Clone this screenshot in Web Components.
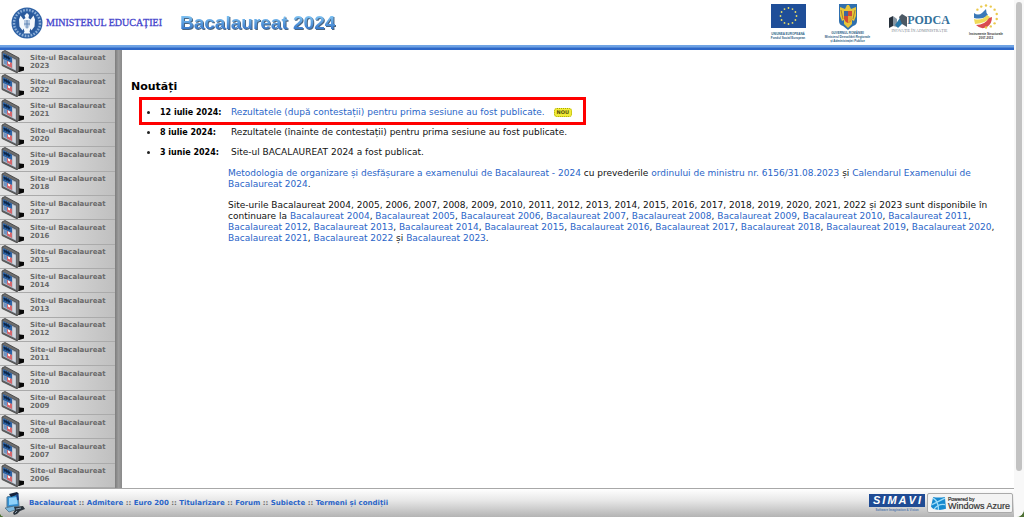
<!DOCTYPE html>
<html lang="ro">
<head>
<meta charset="utf-8">
<title>Bacalaureat 2024</title>
<style>
html, body { margin: 0; height: 100%; }
body { font: 9px/11px Verdana, "DejaVu Sans", sans-serif; color: #111; background: #4d7034; }
</style>
</head>
<body>
<bac-page></bac-page>
<script>
const define = (name, html, setup) => customElements.define(name, class extends HTMLElement {
  constructor() {
    super();
    this.attachShadow({ mode: "open" });
    const t = document.createElement("template");
    t.innerHTML = html;
    this.shadowRoot.append(t.content.cloneNode(true));
  }
  connectedCallback() { if (setup) setup(this, this.shadowRoot); }
});
const range = (a, b) => Array.from({ length: b - a + 1 }, (_, i) => a + i);

define("ministry-logo", `
<style>
:host { display: flex; align-items: center; gap: 3px; color: #4444cc; font: 10px/12px "Liberation Serif", serif; white-space: nowrap; -webkit-text-stroke: .3px #4444cc; }
svg { width: 32px; height: 32px; flex: none; }
</style>
<svg viewBox="0 0 32 32" aria-hidden="true">
  <circle cx="16" cy="16" r="15.5" fill="#2f62a5"/>
  <circle cx="16" cy="16" r="13" fill="none" stroke="#8fb0d8" stroke-width="2.4" stroke-dasharray="1.6 1.4"/>
  <circle cx="16" cy="16" r="10.8" fill="#2a5a9c"/>
  <path d="M16 6l2 2-.5 3 2 1.500 3-4 1.500 4-.5 7-3 4-1-2-1 3 1 2h-7l1-2-1-3-1 2-3-4L8 12.500 9.500 8.500l3 4 2-1.500-1-2.500z" fill="#f4f8fc"/>
  <path d="M13 13h6v5q-1 3-3 4-2-1-3-4z" fill="#b8cbe2"/><path d="M16 13v8M13 17h6" stroke="#5179ad" stroke-width=".8"/>
</svg>
<span>MINISTERUL EDUCAȚIEI</span>`);

define("eu-logo", `
<style>
:host { display: grid; justify-content: center; justify-items: center; align-content: start; width: 36px; color: #2f5f86; font: bold 3px/4px "Liberation Sans", sans-serif; white-space: nowrap; }
svg { width: 35px; height: 24px; margin-bottom: 4px; }
</style>
<svg viewBox="0 0 35 24" aria-hidden="true"><rect width="35" height="24" fill="#1f4e98"/><g id="s" fill="#e9dd66"></g></svg>
<span>UNIUNEA EUROPEANĂ</span><span>Fondul Social European</span>`, (h, r) => {
  r.querySelector("#s").innerHTML = range(0, 11).map(i => `<circle cx="${17.5 + 8 * Math.sin(i * Math.PI / 6)}" cy="${12 - 8 * Math.cos(i * Math.PI / 6)}" r=".9"/>`).join("");
});

define("gov-logo", `
<style>
:host { display: grid; justify-content: center; justify-items: center; align-content: start; width: 47px; color: #2f5f86; font: bold 3px/4px "Liberation Sans", sans-serif; white-space: nowrap; }
svg { width: 20px; height: 26px; margin-bottom: 1px; }
</style>
<svg viewBox="0 0 20 26" aria-hidden="true">
  <path d="M1 0h18v17q0 4-4 5l-5 4-5-4q-4-1-4-5z" fill="#2f6fae"/>
  <path d="M9 1h2l2 4 5-2v9l-2 5-2-1v4l-4 4-4-4v-4l-2 1-2-5V3l5 2z" fill="#e6c53a"/>
  <path d="M6 7h8v8q-1 3-4 4-3-1-4-4z" fill="#cf4a35"/><path d="M6 7h4v5H6z" fill="#3f65a0"/><path d="M10 12h4v3q-1 2-4 4z" fill="#dda935"/>
  <path d="M3 6l2 9M17 6l-2 9" stroke="#a5842d"/>
</svg>
<span>GUVERNUL ROMÂNIEI</span><span>Ministerul Dezvoltării Regionale</span><span>și Administrației Publice</span>`);

define("podca-logo", `
<style>
:host { display: grid; justify-content: center; justify-items: center; align-content: start; width: 61px; padding-top: 9px; color: #7d8790; font: 4px/5px "Liberation Serif", serif; white-space: nowrap; }
div { display: flex; align-items: center; color: #33719b; font: bold 12px/15px "Liberation Serif", serif; }
svg { width: 18px; height: 14px; }
</style>
<div><svg viewBox="0 0 18 14" aria-hidden="true"><path d="M0 4l4-2v10l-4 2z" fill="#27313c"/><path d="M4 2l4 3v8l-4-1z" fill="#8796a2"/><path d="M6 11l7-10v9l-4 4z" fill="#2878a9"/><path d="M10 3l3-3 5 3v10l-5-3z" fill="#4c5965"/></svg><span>PODCA</span></div>
<span>INOVAȚIE ÎN ADMINISTRAȚIE</span>`);

define("structural-logo", `
<style>
:host { display: grid; justify-content: center; justify-items: center; align-content: start; width: 36px; color: #333; font: bold 3px/4px "Liberation Sans", sans-serif; white-space: nowrap; }
svg { width: 28px; height: 27px; margin-bottom: 1px; }
</style>
<svg viewBox="0 0 28 27" aria-hidden="true">
  <path d="M2 9q4 3 8 0l4-4q0 4 2 6-5 5-14 3z" fill="#3a78b8"/>
  <path d="M2 15q8 2 13-4l3 2q-3 6-15 7z" fill="#f0da58"/>
  <path d="M4 21q9 0 13-7l3-1q0 7-5 10-6 3-11-2z" fill="#d94c50"/>
  <g id="s" fill="#eac94c"></g>
</svg>
<span>Instrumente Structurale</span><span>2007-2013</span>`, (h, r) => {
  r.querySelector("#s").innerHTML = range(-2, 7).map(i => `<circle cx="${14 + 11 * Math.sin(i * Math.PI / 7)}" cy="${12.500 - 11 * Math.cos(i * Math.PI / 7)}" r="1.200"/>`).join("");
});

define("site-header", `
<style>
:host { display: block; }
header { display: flex; align-items: center; height: 45px; padding: 0 10px 0 11px; }
h1 { margin: 0 auto 0 18px; font: bold 19px/24px "Liberation Sans", sans-serif; background: linear-gradient(#86caf6 15%, #2c6cc4 85%); background-clip: text; -webkit-background-clip: text; color: transparent; filter: drop-shadow(1px 1px 0 #4a6580); }
.partners { display: flex; gap: 18px; height: 45px; padding-top: 4px; box-sizing: border-box; }
.bar { height: 5px; background: linear-gradient(#6fa3e4 0 40%, #2e68c8 60%); }
</style>
<header><ministry-logo></ministry-logo><h1>Bacalaureat 2024</h1>
<div class="partners"><eu-logo></eu-logo><gov-logo></gov-logo><podca-logo></podca-logo><structural-logo></structural-logo></div></header>
<div class="bar"></div>`);

define("archive-link", `
<style>
:host { display: block; flex: 1 0 24px; box-sizing: border-box; border-bottom: 1px solid #aaa; }
a { display: flex; align-items: center; gap: 6px; height: 100%; color: #6a6a6a; text-decoration: none; font-weight: bold; font-size: 7px; line-height: 8px; }
svg { width: 24px; height: 23px; flex: none; }
span { max-width: 80px; }
</style>
<a href="#"><svg viewBox="0 0 24 23" aria-hidden="true">
  <path d="M17 15l3 1.500 4 .5v3.500l-5 1.500-3-1z" fill="#080808"/>
  <path d="M2 2l3-1.500L19 8v13l-2 1.800L2 15.500z" fill="#6e6e6e" stroke="#3a3a3a" stroke-width=".8"/>
  <path d="M2.500 2.500L16.500 9.500v12L2.500 14.500z" fill="#a9b2c2" stroke="#444" stroke-width=".6"/>
  <path d="M12.500 9l3 1.500v9.500l-3-1.500z" fill="#d4d8de"/>
  <path d="M3 3l9 4.500v5.500L3 9z" fill="#2c62a4"/><path d="M4 5l1 2 1-1 1 2 1-1 1 2 1-1" fill="none" stroke="#0c2547" stroke-width="1.400"/>
  <path d="M4 10l3 1v4l-3-1.500z" fill="#6d94c4"/><path d="M7 11l5 2v5l-5-2.500z" fill="#d6666c"/><path d="M8 11.500l2 1v2l-2-1z" fill="#fff"/>
</svg><span><slot></slot></span></a>`);

define("archive-nav", `
<style>
:host { display: flex; flex: none; width: 122px; box-sizing: border-box; padding-right: 7px; background: linear-gradient(90deg, #7c7c7c, #9c9c9c 50%, #8a8a8a) right / 7px 100% no-repeat, linear-gradient(90deg, #e4e4e4, #dcdcdc 40%, #bcbcbc); }
nav { display: flex; flex-direction: column; flex: 1; }
</style><nav aria-label="Arhivă"></nav>`, (h, r) => {
  r.querySelector("nav").innerHTML = range(2006, 2023).reverse().map(y => `<archive-link>Site-ul Bacalaureat ${y}</archive-link>`).join("");
});

define("new-badge", `
<style>
:host { display: inline-block; margin-left: 9px; padding: 0 2px; border: 1px dotted #a9a900; border-radius: 3px; box-sizing: border-box; height: 9px; background: #f2ec38; color: #55520c; font: bold 5px/7px "DejaVu Sans", sans-serif; }
</style><slot></slot>`);

define("news-item", `
<style>
:host { display: flex; align-items: center; height: 14px; margin-bottom: 6px; padding-left: 7px; }
:host([highlight]) { border: 3px solid #f00; box-sizing: border-box; height: 28px; margin-bottom: 0; padding: 2px 0 0 4px; max-width: 447px; }
i { width: 3px; height: 3px; border-radius: 50%; background: #222; margin: 0 10px 0 1px; flex: none; }
b { width: 71px; font-size: 8px; color: #000; flex: none; }
.body { display: flex; align-items: center; }
</style><i></i><b><slot name="date"></slot></b><div class="body"><slot></slot></div>`);

define("news-page", `
<style>
:host { display: block; flex: 1; min-width: 0; padding: 30px 6px 0 9px; background: #fff; }
h2 { margin: 0 0 4px; font-size: 11px; line-height: 13px; color: #000; }
.list { padding-left: 8px; }
.text { margin: 9px 0 0 97px; }
p { margin: 0 0 10px; }
a { color: #2a65c8; text-decoration: none; }
</style>
<h2>Noutăți</h2>
<div class="list">
<news-item highlight><span slot="date">12 iulie 2024:</span><a href="#">Rezultatele (după contestații) pentru prima sesiune au fost publicate.</a><new-badge>NOU</new-badge></news-item>
<news-item><span slot="date">8 iulie 2024:</span>Rezultatele (înainte de contestații) pentru prima sesiune au fost publicate.</news-item>
<news-item><span slot="date">3 iunie 2024:</span>Site-ul BACALAUREAT 2024 a fost publicat.</news-item>
</div>
<div class="text">
<p><a href="#">Metodologia de organizare și desfășurare a examenului de Bacalaureat - 2024</a> cu prevederile <a href="#">ordinului de ministru nr. 6156/31.08.2023</a> și <a href="#">Calendarul Examenului de Bacalaureat 2024</a>.</p>
<p>Site-urile Bacalaureat ${range(2004, 2022).join(", ").replace(", 2022", ", 2022")} și 2023 sunt disponibile în continuare la ${range(2004, 2022).map(y => `<a href="#">Bacalaureat ${y}</a>`).join(", ")} și <a href="#">Bacalaureat 2023</a>.</p>
</div>`);

define("site-footer", `
<style>
:host { display: flex; align-items: center; height: 29px; box-sizing: border-box; padding: 0 1px 0 4px; border-top: 1px solid #a8a8a8; background: linear-gradient(#fff, #e8e8e8 40%, #b4b4b4); font-size: 7px; line-height: 10px; color: #666; font-weight: bold; }
a { color: #2a65c8; text-decoration: none; }
.icon { width: 21px; height: 23px; margin-right: 4px; flex: none; }
nav { margin-right: auto; }
.simavi { display: grid; justify-items: center; color: #5379ae; font: bold 3px/4px "Liberation Sans", sans-serif; margin-right: 2px; }
.simavi b { display: flex; justify-content: space-between; width: 56px; box-sizing: border-box; padding: 0 4px; background: #1f4b94; color: #fff; font: italic bold 11px/13px "Liberation Sans", sans-serif; margin-bottom: 1px; }
.azure { display: flex; align-items: center; gap: 2px; width: 86px; height: 20px; box-sizing: border-box; border: 1px solid #aaa; border-radius: 2px; background: #f3f3f3; padding-left: 3px; color: #333; font: 9px/9px "Liberation Sans", sans-serif; -webkit-text-stroke: .2px #333; white-space: nowrap; }
.azure small { display: block; font-size: 5px; line-height: 6px; }
.azure svg { width: 15px; height: 15px; flex: none; }
</style>
<svg class="icon" viewBox="0 0 21 23" aria-hidden="true"><path d="M3 5l11-3 1 12-12 1z" fill="#3391d4" stroke="#4e7899"/><path d="M5 6l8-1 .5 7-8.500 1z" fill="#8fd2fa"/><path d="M5 2l8-2 2 2-8 3z" fill="#14223c"/><path d="M13 2l1 6" stroke="#1c3c7c" stroke-width="2"/><path d="M1 16l9-2 4 3-9 3z" fill="#7db8de" stroke="#42677f" stroke-width=".7"/><path d="M10 15l9-1 2 3-5 2-3 3-3 1-1-2 2-3z" fill="#2c343c"/><path d="M12 17l5-1M11 21l2-2" stroke="#8ca0af" stroke-width="1"/></svg>
<nav>${["Bacalaureat", "Admitere", "Euro 200", "Titularizare", "Forum", "Subiecte", "Termeni și condiții"].map(t => `<a href="#">${t}</a>`).join(" :: ")}</nav>
<div class="simavi"><b><span>S</span><span>I</span><span>M</span><span>A</span><span>V</span><span>I</span></b><span>Software Imagination &amp; Vision</span></div>
<div class="azure"><svg viewBox="0 0 14 14" aria-hidden="true"><path d="M2 1q5 1 11 0l1 11q-6 2-12 0L0 10z" fill="#1689cf"/><path d="M2 2q5 3 5 11M13 2Q7 5 1 8M13 8Q7 7 3 12" fill="none" stroke="#9edcf8" stroke-width="1.200"/></svg><span><small>Powered by</small>Windows Azure</span></div>`);

define("bac-page", `
<style>
:host { display: flex; min-height: 100vh; background: #fff; border-radius: 0 0 8px 5px; overflow: hidden; }
.main { display: flex; flex-direction: column; flex: 1; min-width: 0; }
.content { display: flex; flex: 1; }
.track { width: 10px; box-sizing: border-box; padding: 2px; background: #f8f8f8; display: flex; }
.thumb { flex: 1; border-radius: 3px; background: #c2c2c2; margin-bottom: 44px; }
</style>
<div class="main"><site-header></site-header><div class="content"><archive-nav></archive-nav><news-page></news-page></div><site-footer></site-footer></div>
<div class="track"><div class="thumb"></div></div>`);
</script>
</body>
</html>
